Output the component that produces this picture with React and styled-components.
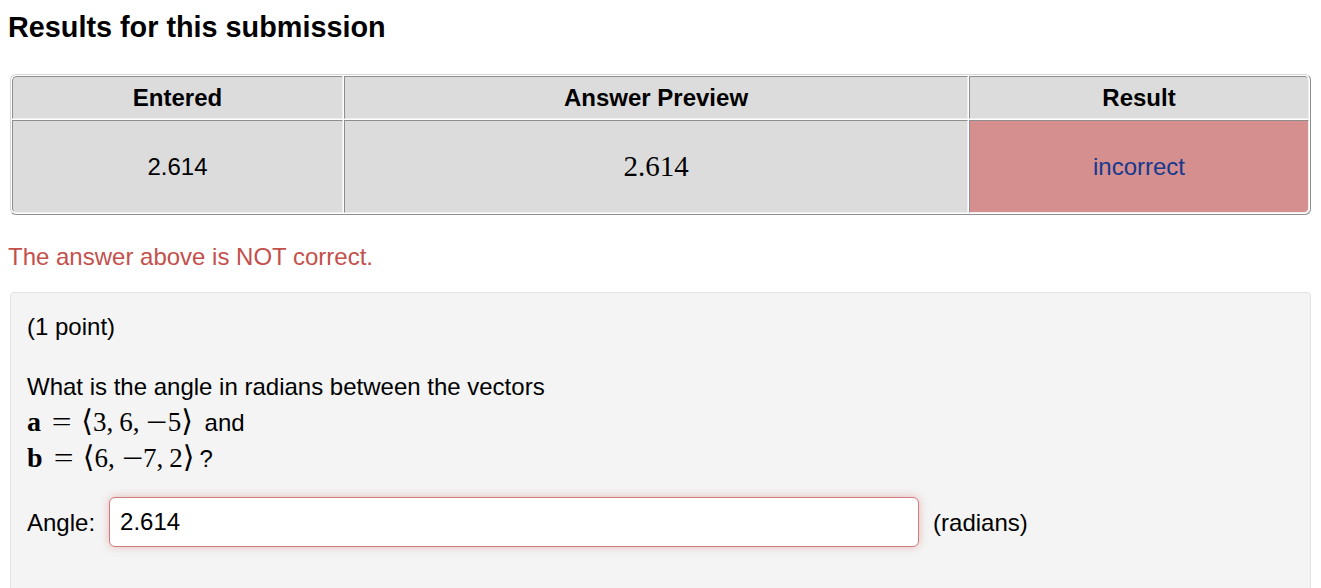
import React from 'react';
import styled, { createGlobalStyle } from 'styled-components';

const GlobalStyle = createGlobalStyle`
    body {
        margin: 0;
        background: #fff;
        font-family: "Liberation Sans", Arial, sans-serif;
        color: #000;
    }
`;

const Page = styled.div`
    padding: 11px 10px 0 8px;
    width: 1303px;
`;

const Title = styled.h2`
    margin: 0 0 30px;
    font-size: 28.8px;
    font-weight: 700;
`;

const ResultsTable = styled.table`
    margin-left: 2px;
    width: 1301px;
    table-layout: fixed;
    border-collapse: separate;
    border-spacing: 1px;
    border: 1px solid;
    border-color: #d6d6d6 #8e8e8e #8e8e8e #d6d6d6;
    border-radius: 6px;
    background: #fff;
    font-size: 24px;
    th,
    td {
        border: 1px solid;
        border-color: #8e8e8e #eee #eee #8e8e8e;
        background: #dcdcdc;
        text-align: center;
        vertical-align: middle;
        padding: 0;
    }
    th {
        height: 41px;
        font-weight: 700;
    }
    td {
        height: 91px;
    }
    tr:first-child th:first-child {
        border-top-left-radius: 5px;
    }
    tr:first-child th:last-child {
        border-top-right-radius: 5px;
    }
    tr:last-child td:first-child {
        border-bottom-left-radius: 5px;
    }
    tr:last-child td:last-child {
        border-bottom-right-radius: 5px;
    }
`;

const ResultCell = styled.td`
    && {
        background: ${(p) => (p.$correct ? '#8fd18f' : '#d48f8e')};
        color: #16398f;
    }
`;

const PreviewMath = styled.span`
    font-family: "Liberation Serif", "DejaVu Serif", serif;
    font-size: 29px;
`;

const Message = styled.div`
    margin: 28px 0 21px;
    font-size: 24px;
    color: #c4504c;
`;

const ProblemBox = styled.div`
    margin-left: 2px;
    width: 1301px;
    box-sizing: border-box;
    min-height: 320px;
    padding: 16px 16px 20px;
    background: #f4f4f4;
    border: 1px solid #e2e2e2;
    border-radius: 4px;
    font-size: 24px;
    line-height: 35px;
`;

const Paragraph = styled.p`
    margin: 0 0 ${(p) => p.$gap || 0}px;
`;

const Math = styled.span`
    font-family: "Liberation Serif", "DejaVu Serif", serif;
    font-size: 27px;
    margin-right: 5px;
`;

const Bold = styled.b`
    font-weight: 700;
    font-size: 28px;
`;

const Rel = styled.span`
    display: inline-block;
    margin: 0 12px 0 13px;
    transform: scaleX(1.3);
`;

const Neg = styled.span`
    display: inline-block;
    margin: 0 3px 0 4px;
    transform: scaleX(1.4);
`;

const Sep = styled.span`
    margin-right: 6px;
`;

const Bracket = styled.span`
    font-family: "DejaVu Serif", serif;
    font-size: 30px;
    line-height: 1;
`;

const AnswerRow = styled.div`
    display: flex;
    align-items: center;
    gap: 14px;
    margin-top: 21px;
`;

const AnswerInput = styled.input`
    width: 810px;
    height: 50px;
    box-sizing: border-box;
    padding: 0 10px;
    border: 1px solid #d07c7c;
    border-radius: 6px;
    background: #fff;
    box-shadow: 0 0 8px rgba(210, 110, 110, 0.45);
    font-family: "Liberation Sans", Arial, sans-serif;
    font-size: 24px;
    color: #000;
    outline: none;
`;

const Value = ({ v }) =>
    v.startsWith('-') ? (
        <>
            <Neg>−</Neg>
            {v.slice(1)}
        </>
    ) : (
        v
    );

const Vector = ({ name, values }) => (
    <Math>
        <Bold>{name}</Bold>
        <Rel>=</Rel>
        <Bracket>⟨</Bracket>
        {values.map((v, i) => (
            <span key={i}>
                <Value v={v} />
                {i < values.length - 1 && <Sep>,</Sep>}
            </span>
        ))}
        <Bracket>⟩</Bracket>
    </Math>
);

export default function App() {
    return (
        <Page>
            <GlobalStyle />
            <Title>Results for this submission</Title>
            <ResultsTable>
                <colgroup>
                    <col style={{ width: 331 }} />
                    <col style={{ width: 624 }} />
                    <col />
                </colgroup>
                <thead>
                    <tr>
                        <th>Entered</th>
                        <th>Answer Preview</th>
                        <th>Result</th>
                    </tr>
                </thead>
                <tbody>
                    <tr>
                        <td>2.614</td>
                        <td>
                            <PreviewMath>2.614</PreviewMath>
                        </td>
                        <ResultCell>incorrect</ResultCell>
                    </tr>
                </tbody>
            </ResultsTable>
            <Message>The answer above is NOT correct.</Message>
            <ProblemBox>
                <Paragraph $gap={25}>(1 point)</Paragraph>
                <Paragraph>
                    What is the angle in radians between the vectors
                    <br />
                    <Vector name="a" values={['3', '6', '-5']} /> and
                    <br />
                    <Vector name="b" values={['6', '-7', '2']} />?
                </Paragraph>
                <AnswerRow>
                    <span>Angle:</span>
                    <AnswerInput defaultValue="2.614" />
                    <span>(radians)</span>
                </AnswerRow>
            </ProblemBox>
        </Page>
    );
}
